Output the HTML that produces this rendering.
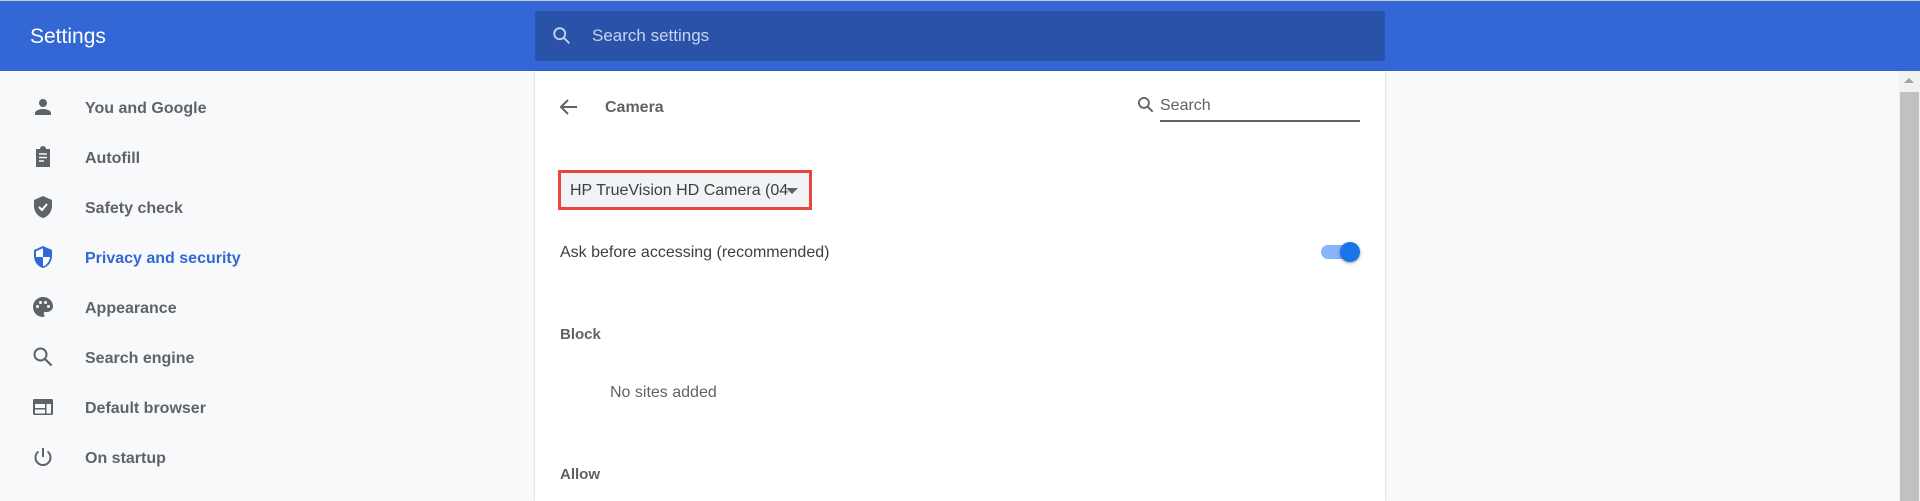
<!DOCTYPE html>
<html><head><meta charset="utf-8"><style>
*{margin:0;padding:0;box-sizing:border-box}
body{width:1920px;height:501px;overflow:hidden;background:#f8f9fa;font-family:"Liberation Sans",sans-serif;position:relative}
.top{position:absolute;left:0;top:0;width:1920px;height:1px;background:#c8c8c8}
.hdr{position:absolute;left:0;top:1px;width:1920px;height:70px;background:#3367d6}
.title{position:absolute;left:30px;top:24px;color:#fff;font-size:21px}
.sbox{position:absolute;left:535px;top:11px;width:850px;height:50px;background:#2a52a8;border-radius:3px}
.sbox span{position:absolute;left:57px;top:15px;color:#c8d3ee;font-size:17px}
.item{position:absolute;left:0;height:24px;width:530px}
.item svg{position:absolute;left:31px;top:0}
.item span{position:absolute;left:85px;top:5px;font-size:16px;font-weight:bold;color:#5f6368}
.card{position:absolute;left:535px;top:71px;width:850px;height:430px;background:#fff;box-shadow:0 0 2px rgba(0,0,0,.25)}
.t{position:absolute;color:#3c4043;font-size:16px}
</style></head><body>
<div class="top"></div>
<div class="hdr"><div class="title">Settings</div></div>
<div class="sbox"><svg style="position:absolute;left:16px;top:14px" width="22" height="22" viewBox="0 0 24 24"><circle cx="9.5" cy="9.5" r="6" fill="none" stroke="#c8d3ee" stroke-width="2"/><path d="M14 14l6 6" stroke="#c8d3ee" stroke-width="2"/></svg><span>Search settings</span></div>

<div class="item" style="top:95px"><svg width="24" height="24" viewBox="0 0 24 24"><circle cx="12" cy="8" r="4" fill="#5f6368"/><path d="M4 20v-2c0-2.7 5.3-4 8-4s8 1.3 8 4v2z" fill="#5f6368"/></svg><span>You and Google</span></div>
<div class="item" style="top:145px"><svg width="24" height="24" viewBox="0 0 24 24"><path d="M5 4h4a3 3 0 016 0h4v18H5z" fill="#5f6368"/><path d="M8 9h8M8 12.5h8M8 16h5" stroke="#f8f9fa" stroke-width="1.6"/></svg><span>Autofill</span></div>
<div class="item" style="top:195px"><svg width="24" height="24" viewBox="0 0 24 24"><path d="M12 1L3 5v6c0 5.5 3.8 10.7 9 12 5.2-1.3 9-6.5 9-12V5z" fill="#5f6368"/><path d="M8 12l3 3 5-6" stroke="#fff" stroke-width="2" fill="none"/></svg><span>Safety check</span></div>
<div class="item" style="top:245px"><svg width="24" height="24" viewBox="0 0 24 24"><path d="M12 1L3 5v6c0 5.5 3.8 10.7 9 12 5.2-1.3 9-6.5 9-12V5z" fill="#3367d6"/><path d="M12 3.2v8.8h7c-.4 4.4-3.3 8.3-7 9.4V12H5V6.3z" fill="#fff"/></svg><span style="color:#3367d6">Privacy and security</span></div>
<div class="item" style="top:295px"><svg width="24" height="24" viewBox="0 0 24 24"><path d="M12 2C6.5 2 2 6.5 2 12s4.5 10 10 10c1 0 1.5-.7 1.5-1.5 0-.4-.2-.8-.4-1-.3-.3-.4-.6-.4-1 0-.8.7-1.5 1.5-1.5H16c3 0 6-2.5 6-5.5C22 6 17.5 2 12 2z" fill="#5f6368"/><circle cx="6.5" cy="11.5" r="1.5" fill="#f8f9fa"/><circle cx="9.5" cy="7.5" r="1.5" fill="#f8f9fa"/><circle cx="14.5" cy="7.5" r="1.5" fill="#f8f9fa"/><circle cx="17.5" cy="11.5" r="1.5" fill="#f8f9fa"/></svg><span>Appearance</span></div>
<div class="item" style="top:345px"><svg width="24" height="24" viewBox="0 0 24 24"><circle cx="9.5" cy="9.5" r="6" fill="none" stroke="#5f6368" stroke-width="2"/><path d="M14 14l6.5 6.5" stroke="#5f6368" stroke-width="2.2"/></svg><span>Search engine</span></div>
<div class="item" style="top:395px"><svg width="24" height="24" viewBox="0 0 24 24"><rect x="2" y="4" width="20" height="16" rx="1.5" fill="#5f6368"/><rect x="4" y="9" width="10" height="4" fill="#f8f9fa"/><rect x="4" y="14.5" width="10" height="4" fill="#f8f9fa"/><rect x="15.5" y="9" width="4.5" height="9.5" fill="#f8f9fa"/></svg><span>Default browser</span></div>
<div class="item" style="top:445px"><svg width="24" height="24" viewBox="0 0 24 24"><path d="M12 3v9" stroke="#5f6368" stroke-width="2"/><path d="M7.5 6.5a7.5 7.5 0 109 0" fill="none" stroke="#5f6368" stroke-width="2"/></svg><span>On startup</span></div>

<div class="card">
<svg style="position:absolute;left:22px;top:24px" width="24" height="24" viewBox="0 0 24 24"><path d="M20 12H5M11 5l-7 7 7 7" stroke="#5f6368" stroke-width="2" fill="none"/></svg>
<div class="t" style="left:70px;top:28px;color:#5f6368;font-weight:bold;font-size:16px">Camera</div>
<svg style="position:absolute;left:601px;top:24px" width="20" height="20" viewBox="0 0 24 24"><circle cx="9.5" cy="9.5" r="6" fill="none" stroke="#5f6368" stroke-width="2.2"/><path d="M14 14l6 6" stroke="#5f6368" stroke-width="2.4"/></svg>
<div class="t" style="left:625px;top:26px;color:#5f6368">Search</div>
<div style="position:absolute;left:625px;top:49px;width:200px;height:2px;background:#5f6368"></div>
<div style="position:absolute;left:23px;top:99px;width:254px;height:40px;border:3px solid #e8453c;background:#f1f3f4"></div>
<div class="t" style="left:35px;top:111px;width:226px;white-space:nowrap;overflow:hidden">HP TrueVision HD Camera (04</div>
<div style="position:absolute;left:251px;top:117px;width:0;height:0;border-left:6px solid transparent;border-right:6px solid transparent;border-top:6px solid #5f6368"></div>
<div class="t" style="left:25px;top:173px">Ask before accessing (recommended)</div>
<div style="position:absolute;left:786px;top:174px;width:34px;height:14px;border-radius:7px;background:#8ab4f8"></div>
<div style="position:absolute;left:805px;top:171px;width:20px;height:20px;border-radius:10px;background:#1a73e8;box-shadow:0 1px 3px rgba(0,0,0,.4)"></div>
<div class="t" style="left:25px;top:255px;color:#5f6368;font-weight:bold;font-size:15px">Block</div>
<div class="t" style="left:75px;top:313px;color:#5f6368">No sites added</div>
<div class="t" style="left:25px;top:395px;color:#5f6368;font-weight:bold;font-size:15px">Allow</div>
</div>
<div style="position:absolute;left:1899px;top:71px;width:21px;height:430px;background:#f1f1f1"></div>
<div style="position:absolute;left:1904px;top:78px;width:0;height:0;border-left:5px solid transparent;border-right:5px solid transparent;border-bottom:5px solid #a3a3a3"></div>
<div style="position:absolute;left:1900px;top:92px;width:19px;height:409px;background:#c1c1c1"></div>
</body></html>
